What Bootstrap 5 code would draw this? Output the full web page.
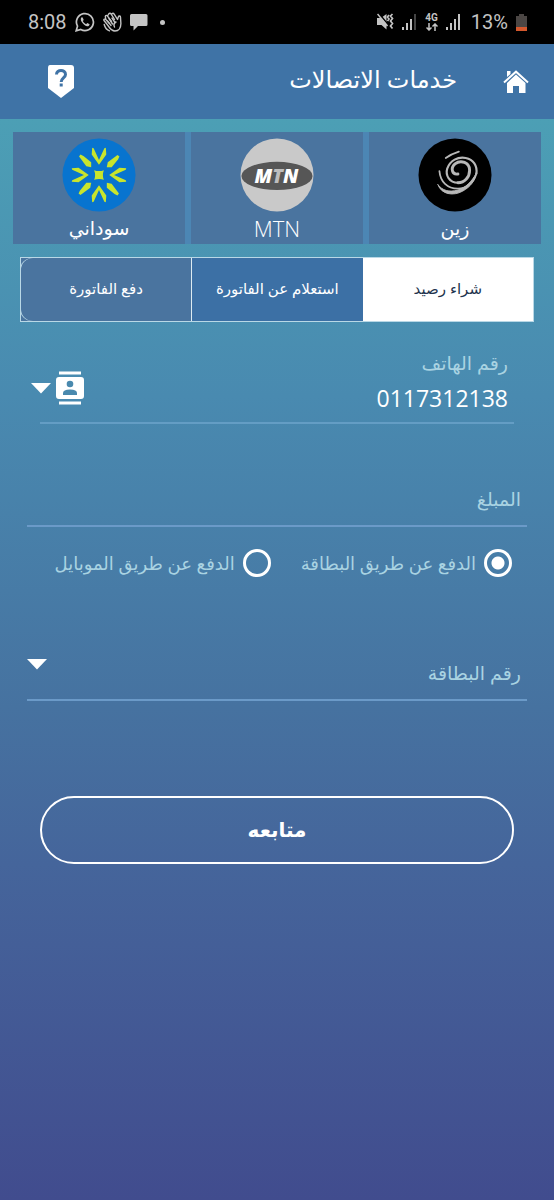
<!DOCTYPE html>
<html lang="ar" dir="rtl">
<head>
<meta charset="utf-8">
<meta name="viewport" content="width=device-width, initial-scale=1">
<title>خدمات الاتصالات</title>
<link href="https://cdn.jsdelivr.net/npm/bootstrap@5.3.0/dist/css/bootstrap.min.css" rel="stylesheet">
<style>
  body { font-family: "Open Sans", "DejaVu Sans", sans-serif; background: #414c8e; color: #fff; }
  .screen { background: linear-gradient(#4c9fb5 119px, #498ab0 33%, #4672a0 59%, #45659b 72%, #414c8e 100%); }
  .status-bar { background: #000; color: #c4c4c4; height: 44px; padding: 0 27px 0 28px; font: 20px/44px Roboto, sans-serif; }
  .net-type { font-size: 10px; line-height: 10px; font-weight: 700; }
  .app-bar { background: #3f73a6; height: 75px; padding: 0 23px 0 46px; }
  .app-bar h1 { font-size: 24px; line-height: 32px; margin-right: 46px; padding-bottom: 6px; }
  .operators { margin: 13px 13px 0; background: #4c86b4; gap: 6px; }
  .operator { background: #4a749f; color: #fff; height: 112px; padding: 6px 0 0; border: 0; font-size: 19px; line-height: 32px; }
  .operator .latin-name { font-size: 22px; font-weight: 300; }
  .services { margin: 13px 20px 0; height: 65px; border: 1px solid #b9d8e6; background: #4a749f; }
  .services button { border: 0; background: #3c70a5; color: #fff; font-size: 15px; line-height: 24px; padding: 0 0 4px; }
  .services .current { background: #fff; color: #22334d; }
  .services .last-tab { background: #4a749f; border-right: 1px solid #dcebf2; box-shadow: -1px 0 0 #b9d8e6; border-radius: 12px 0 0 12px; }
  .hint, .line-field::placeholder { color: #a9d3e2; opacity: 1; }
  .hint, .line-field { font-size: 19px; line-height: 28px; }
  .phone-box { margin: 27px 40px 0; padding: 0 6px 8px; border-bottom: 2px solid #649dc4; }
  .phone-box input { font-size: 23px; line-height: 32px; direction: ltr; text-align: right; margin-top: 5px; }
  .bare { border: 0; background: transparent; color: #fff; padding: 0; outline-offset: 4px; border-radius: 0; }
  .contacts { position: absolute; left: -9px; top: 22px; }
  .line-box { margin: 0 27px; border-bottom: 2px solid #6b9ac8; }
  .line-field { appearance: none; padding: 0 6px 12px; }
  .amount-box { margin-top: 61px; }
  .card-box { margin-top: 82px; }
  .card-box .line-field { color: #a9d3e2; }
  .card-caret { position: absolute; left: 0; top: 0; pointer-events: none; }
  .methods { margin: 22px 42px 0; gap: 30px; }
  .method .hint { font-size: 18px; }
  .method input { appearance: none; width: 28px; height: 28px; margin: 0; border: 3px solid #fff; border-radius: 50%; }
  .method input:checked { background: radial-gradient(#fff 6px, transparent 7px); }
  .proceed { margin: 95px 40px 0; height: 68px; border: 2px solid #fff; border-radius: 34px; font-size: 20px; font-weight: 700; color: #fff; }
</style>
</head>
<body>
<div class="screen min-vh-100 d-flex flex-column">
  <div class="status-bar d-flex align-items-center justify-content-between" dir="ltr">
    <div class="d-flex align-items-center">
      <span>8:08</span>
      <svg class="ms-2" width="20" height="20" viewBox="0 0 20 20" fill="none" stroke="#c4c4c4" stroke-width="1.7"><path d="M1.2 18.8 2.5 14.2A8.5 8.5 0 1 1 5.8 17.5Z"/><path d="M6.6 5.2c-1.2 1-1 2.900.2 4.900 1.500 2.300 3.200 3.700 5.200 4.200 1.300.2 2.500-.6 2.600-2l-2.300-1.200-1.200 1.200c-1.600-.7-2.600-1.800-3.300-3.200l.9-1.200-1-2.500Z" fill="#c4c4c4" stroke="none"/></svg>
      <svg class="ms-2" width="19" height="20" viewBox="0 0 19 20" fill="none" stroke="#c4c4c4" stroke-width="1.400" stroke-linecap="round" stroke-linejoin="round"><path d="M5 13.500 1 8.500c-.6-1.400 1-2 1.800-1L6 11M2.800 7.500 2.300 4.500c.1-1.500 1.600-1.500 2.200-.3L8.500 9.500M4.500 4 5.700 2c1-1.300 2-.7 2.500.2l3.300 5.300M8.500 2.500c.8-1.700 2-1.500 2.700-.3l3.300 5.300.8-2.500c.5-1.500 2.200-1.200 2.200.2l.4 6.300c0 4-2 7.500-6 7.500-3 0-5-2.500-7-5.500"/><path d="M6 6.500 9.500 12M9 6l3 4.500M4.500 9 8 13.500M13 10c-2 1-2.500 3-1.500 5M1.200 12.500c.8 3 2.800 5.500 5.300 6.300"/></svg>
      <svg class="ms-2" width="18" height="17" viewBox="0 0 18 17" fill="#c4c4c4"><path d="M1.500 0h14.500q1.500 0 1.500 1.500v9q0 1.500-1.500 1.500H8l-4.500 4.500V12h-2Q0 12 0 10.500v-9Q0 0 1.500 0Z"/></svg>
      <svg style="margin-left:12px" width="5" height="5" viewBox="0 0 5 5" fill="#c4c4c4"><circle cx="2.500" cy="2.500" r="2.500"/></svg>
    </div>
    <div class="d-flex align-items-center">
      <svg width="17" height="18" viewBox="0 0 17 18"><path d="M0 5h4L9.500 1v15.500L4.500 12H0Z" fill="#c4c4c4"/><path d="M1.500 0 11 11.500" stroke="#000" stroke-width="1.600"/><path d="m.5 1 10 12" stroke="#c4c4c4" stroke-width="1.500"/><path d="m12 2-1.500 2L12 6l-1.500 2M15.500 1l-2 2 2 2.500-2 2.500 2 2.500-2 2.500 2 2.500" fill="none" stroke="#c4c4c4" stroke-width="1.700"/></svg>
      <svg class="ms-2" width="15" height="16" viewBox="0 0 15 16" fill="#c4c4c4"><path d="M0 13h2v3H0zM4 9h2v7H4zM8 5h2v11H8z"/><path fill="#444" d="M12 0h2v16h-2z"/></svg>
      <span class="net-type d-flex flex-column align-items-center ms-2"><span>4G</span><svg width="12" height="8" viewBox="0 0 12 8" fill="none" stroke="#c4c4c4" stroke-width="1.500"><path d="M3 0v7M.5 4.500 3 7l2.500-2.500M9 8V1M6.500 3.500 9 1l2.500 2.500"/></svg></span>
      <svg class="ms-2" width="15" height="16" viewBox="0 0 15 16" fill="#c4c4c4"><path d="M0 13h2v3H0zM4 9h2v7H4zM8 5h2v11H8zM12 0h2v16h-2z"/></svg>
      <span style="margin-left:10px">13%</span>
      <svg class="ms-2" width="11" height="17" viewBox="0 0 11 17"><path d="M3 0h5v2h3v15H0V2h3Z" fill="#4b4644"/><path d="M0 13h11v4H0Z" fill="#d4582d"/></svg>
    </div>
  </div>

  <header class="app-bar d-flex align-items-center justify-content-between">
    <div class="d-flex align-items-center">
      <a href="#" class="d-flex" aria-label="الرئيسية" style="margin-right:2px">
        <svg width="26" height="24" viewBox="0 0 26 24" fill="#fff"><path d="M13 4.500 22.500 13v10H16v-7h-6v7H4V13Z"/><path d="M1 12.500 13 1.700l12 10.800" fill="none" stroke="#fff" stroke-width="2"/><path d="M4 1h3.500v3L4 7Z"/></svg>
      </a>
      <h1 class="fw-normal mb-0">خدمات الاتصالات</h1>
    </div>
    <button class="bare d-flex" type="button" aria-label="مساعدة">
      <svg width="30" height="36" viewBox="0 0 30 36"><path d="M4 1h21q3 0 3 3v20L15 34 2 24V4Q2 1 4 1Z" fill="#fff"/><path d="M10.500 10.500C10.500 5 19.500 5 19.500 10.500c0 3.500-4.300 3.500-4.300 7.500M15.200 19.500v3" fill="none" stroke="#3f73a6" stroke-width="3"/></svg>
    </button>
  </header>

  <main>
    <div class="operators d-flex">
      <button class="operator flex-fill w-100 d-flex flex-column align-items-center" type="button">
        <svg width="76" height="76" viewBox="0 0 76 76" fill="none"><circle cx="38" cy="38" r="37.500" fill="#000"/><g stroke="#b8b8b8" stroke-linecap="round" stroke-linejoin="round"><path d="M41 37C35 38 33 31 38 26.500 44 22 53 25 53 33c0 7-5 13-12 13" stroke-width="3"/><path d="M41 46C32 46 28 38 30 31.500 33 23 41 19 49 20.500c8 1.500 12 8 11 16" stroke-width="2.200"/><path d="M60 36C58 45 50 52 41 52 30 52 23 45 22 34" stroke-width="1.800"/><path d="M20.500 48C24 58 36 60 46 54.500 54 50 58.500 44 60 36 55 45 49 51 41 53.500 32 56 25 54 20.500 48Z" fill="#b8b8b8" stroke-width="1"/><path d="M28.500 20.500Q34 16.500 42 14" stroke-width="1.800"/></g></svg>
        <span>زين</span>
      </button>
      <button class="operator flex-fill w-100 d-flex flex-column align-items-center" type="button">
        <svg width="76" height="76" viewBox="0 0 76 76"><circle cx="38" cy="38" r="37.500" fill="#c9c9c9"/><ellipse cx="38" cy="39" rx="36.500" ry="14.500" fill="#565656"/><text x="37.500" y="46" text-anchor="middle" fill="#fff" font-family="Open Sans" font-size="20" font-weight="800" font-style="italic">M<tspan fill="#bdbdbd">T</tspan>N</text></svg>
        <span class="latin-name">MTN</span>
      </button>
      <button class="operator flex-fill w-100 d-flex flex-column align-items-center" type="button">
        <svg width="76" height="76" viewBox="-38 -38 76 76"><circle r="37.500" fill="#0874cf"/><g fill="#c9e52c"><path d="M-5-5Q0-3 5-5 3 0 5 5 0 3-5 5-3 0-5-5Z"/><g id="ray"><path d="M0-10.500-7.500-21-7-28-5.500-27.500 0-15.500 5.500-27.500 7-28 7.500-21Z"/></g><use href="#ray" transform="rotate(90)"/><use href="#ray" transform="rotate(180)"/><use href="#ray" transform="rotate(270)"/><g id="leaf"><path d="M8-8 9-13 19-20.500 21-19 19.500-16 13-8Z"/></g><use href="#leaf" transform="rotate(90)"/><use href="#leaf" transform="rotate(180)"/><use href="#leaf" transform="rotate(270)"/></g></svg>
        <span>سوداني</span>
      </button>
    </div>

    <div class="services d-flex">
      <button class="current flex-fill w-100" type="button">شراء رصيد</button>
      <button class="flex-fill w-100" type="button">استعلام عن الفاتورة</button>
      <button class="last-tab flex-fill w-100" type="button">دفع الفاتورة</button>
    </div>

    <form>
      <div class="phone-box position-relative">
        <label class="hint d-block" for="phone">رقم الهاتف</label>
        <input class="bare d-block w-100" id="phone" type="tel" value="0117312138">
        <button class="bare contacts d-flex align-items-center" type="button" dir="ltr" aria-label="جهات الاتصال">
          <svg width="20" height="11" viewBox="0 0 20 11" fill="#fff"><path d="M0 0h20L10 10.500Z"/></svg>
          <svg style="margin-left:5px" width="28" height="34" viewBox="0 0 28 34"><path d="M3 .5h22v3H3zM3 30.500h22v3H3zM3 6h22q3 0 3 3v16q0 3-3 3H3q-3 0-3-3V9q0-3 3-3Z" fill="#fff"/><circle cx="14" cy="13" r="3.300" fill="#4989ae"/><path d="M7 24v-2q0-3.500 7-3.500t7 3.500v2Z" fill="#4989ae"/></svg>
        </button>
      </div>

      <div class="line-box amount-box">
        <input class="bare line-field d-block w-100" type="text" inputmode="decimal" placeholder="المبلغ" aria-label="المبلغ">
      </div>

      <div class="methods d-flex">
        <div class="method d-flex align-items-center gap-2">
          <input type="radio" name="method" id="by-card" checked>
          <label class="hint" for="by-card">الدفع عن طريق البطاقة</label>
        </div>
        <div class="method d-flex align-items-center gap-2">
          <input type="radio" name="method" id="by-mobile">
          <label class="hint" for="by-mobile">الدفع عن طريق الموبايل</label>
        </div>
      </div>

      <div class="line-box card-box position-relative">
        <select class="bare line-field d-block w-100" aria-label="رقم البطاقة">
          <option>رقم البطاقة</option>
        </select>
        <svg class="card-caret" width="20" height="11" viewBox="0 0 20 11" fill="#fff"><path d="M0 0h20L10 10.500Z"/></svg>
      </div>

      <div class="d-grid">
        <button class="btn proceed" type="submit">متابعه</button>
      </div>
    </form>
  </main>
</div>
<script src="https://cdn.jsdelivr.net/npm/bootstrap@5.3.0/dist/js/bootstrap.bundle.min.js"></script>
</body>
</html>
